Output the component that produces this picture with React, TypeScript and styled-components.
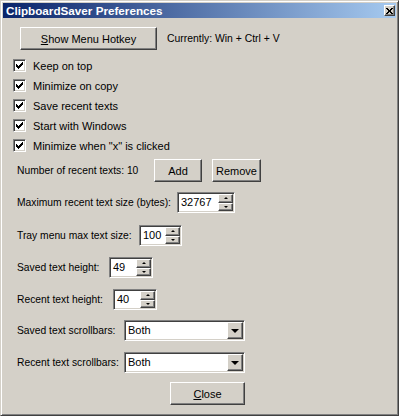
import React from 'react';
import styled, { createGlobalStyle } from 'styled-components';

const GlobalStyle = createGlobalStyle`
    html, body {
        margin: 0;
        padding: 0;
        background: #d4d0c8;
    }
    body {
        font-family: "Liberation Sans", Arial, sans-serif;
        font-size: 11px;
        color: #000;
    }
`;

// classic 7x7 check bitmap
const CHECK = [
    '......#',
    '.....##',
    '#...###',
    '##.###.',
    '#####..',
    '.###...',
    '..#....',
];

const checkboxes = [
    'Keep on top',
    'Minimize on copy',
    'Save recent texts',
    'Start with Windows',
    'Minimize when "x" is clicked',
];

const CheckMark = () => (
    <svg width="7" height="7" viewBox="0 0 7 7" shapeRendering="crispEdges">
        {CHECK.map((row, y) =>
            row.split('').map((c, x) =>
                c === '#' ? <rect key={`${x}-${y}`} x={x} y={y} width="1" height="1" fill="#000" /> : null
            )
        )}
    </svg>
);

const CloseGlyph = () => (
    <svg width="7" height="6" viewBox="0 0 7 6" shapeRendering="crispEdges">
        <path d="M0 0h2v1H0zM5 0h2v1H5zM1 1h2v1H1zM4 1h2v1H4zM2 2h3v2H2zM1 4h2v1H1zM4 4h2v1H4zM0 5h2v1H0zM5 5h2v1H5z" fill="#000" />
    </svg>
);

const Spinner = ({ value, width }: { value: string; width: number }) => (
    <SpinBox $w={width}>
        <SpinValue>{value}</SpinValue>
        <SpinButtons>
            <SpinButton><Arrow $up /></SpinButton>
            <SpinButton><Arrow /></SpinButton>
        </SpinButtons>
    </SpinBox>
);

const Combo = ({ value }: { value: string }) => (
    <ComboBox>
        <ComboValue>{value}</ComboValue>
        <DropButton><DropArrow /></DropButton>
    </ComboBox>
);

const App = () => {
    return (
        <>
            <GlobalStyle />
            <Window>
                <TitleBar>
                    <Title>ClipboardSaver Preferences</Title>
                    <CaptionButton><CloseGlyph /></CaptionButton>
                </TitleBar>
                <Body>
                    <Row $mt={9} $ml={17}>
                        <Button $w={137}><u>S</u>how Menu Hotkey</Button>
                        <Text $ml={10}>Currently: Win + Ctrl + V</Text>
                    </Row>
                    <CheckList>
                        {checkboxes.map((label) => (
                            <CheckRow key={label}>
                                <CheckBox><CheckMark /></CheckBox>
                                <span>{label}</span>
                            </CheckRow>
                        ))}
                    </CheckList>
                    <Row $mt={7} $ml={14}>
                        <Label $w={137}>Number of recent texts: 10</Label>
                        <Button $w={48}>Add</Button>
                        <Button $w={49} $ml={10}>Remove</Button>
                    </Row>
                    <Row $mt={10} $ml={14}>
                        <Label $w={160}>Maximum recent text size (bytes):</Label>
                        <Spinner value="32767" width={58} />
                    </Row>
                    <Row $mt={12} $ml={14}>
                        <Label $w={122}>Tray menu max text size:</Label>
                        <Spinner value="100" width={43} />
                    </Row>
                    <Row $mt={11} $ml={14}>
                        <Label $w={92}>Saved text height:</Label>
                        <Spinner value="49" width={44} />
                    </Row>
                    <Row $mt={11} $ml={14}>
                        <Label $w={96}>Recent text height:</Label>
                        <Spinner value="40" width={44} />
                    </Row>
                    <Row $mt={10} $ml={14}>
                        <Label $w={107}>Saved text scrollbars:</Label>
                        <Combo value="Both" />
                    </Row>
                    <Row $mt={11} $ml={14}>
                        <Label $w={107}>Recent text scrollbars:</Label>
                        <Combo value="Both" />
                    </Row>
                    <Row $mt={9} $ml={167}>
                        <Button $w={75}><u>C</u>lose</Button>
                    </Row>
                </Body>
            </Window>
        </>
    );
}

const raised = `
    border-style: solid;
    border-width: 1px;
    border-color: #fff #404040 #404040 #fff;
    box-shadow: inset -1px -1px 0 #808080, inset 1px 1px 0 #d4d0c8;
`;

const sunken = `
    border-style: solid;
    border-width: 1px;
    border-color: #808080 #fff #fff #808080;
    box-shadow: inset 1px 1px 0 #404040, inset -1px -1px 0 #d4d0c8;
`;

const Window = styled.div`
    box-sizing: border-box;
    width: 399px;
    height: 416px;
    background: #d4d0c8;
    border-style: solid;
    border-width: 1px;
    border-color: #d4d0c8 #404040 #404040 #d4d0c8;
    box-shadow: inset 1px 1px 0 #fff, inset -1px -1px 0 #808080;
    padding: 2px;
    display: flex;
    flex-direction: column;
`;

const TitleBar = styled.div`
    height: 15px;
    flex-shrink: 0;
    display: flex;
    align-items: center;
    justify-content: space-between;
    padding: 0 1px 0 3px;
    background: linear-gradient(to right, #0a246a, #a6caf0);
`;

const Title = styled.span`
    color: #fff;
    font-weight: bold;
    font-size: 11.7px;
    line-height: 15px;
    white-space: nowrap;
`;

const CaptionButton = styled.div`
    box-sizing: border-box;
    width: 11px;
    height: 11px;
    background: #d4d0c8;
    ${raised}
    display: flex;
    align-items: center;
    justify-content: center;
`;

const Body = styled.div`
    display: flex;
    flex-direction: column;
`;

const Row = styled.div<{ $mt: number; $ml: number }>`
    display: flex;
    align-items: center;
    margin-top: ${(p) => p.$mt}px;
    margin-left: ${(p) => p.$ml}px;
`;

const Text = styled.span<{ $ml?: number }>`
    margin-left: ${(p) => p.$ml || 0}px;
    font-size: 10.4px;
    white-space: nowrap;
`;

const Label = styled.span<{ $w: number }>`
    width: ${(p) => p.$w}px;
    flex-shrink: 0;
    font-size: 10.3px;
    white-space: nowrap;
`;

const Button = styled.div<{ $w: number; $ml?: number }>`
    box-sizing: border-box;
    width: ${(p) => p.$w}px;
    height: 23px;
    margin-left: ${(p) => p.$ml || 0}px;
    ${raised}
    background: #d4d0c8;
    display: flex;
    align-items: center;
    justify-content: center;
    white-space: nowrap;
`;

const CheckList = styled.div`
    display: flex;
    flex-direction: column;
    gap: 7px;
    margin-top: 9px;
    margin-left: 10px;
`;

const CheckRow = styled.div`
    display: flex;
    align-items: center;
    height: 13px;
    gap: 7px;
    white-space: nowrap;
`;

const CheckBox = styled.div`
    box-sizing: border-box;
    width: 13px;
    height: 13px;
    background: #fff;
    ${sunken}
    display: flex;
    align-items: center;
    justify-content: center;
`;

const SpinBox = styled.div<{ $w: number }>`
    box-sizing: border-box;
    width: ${(p) => p.$w}px;
    height: 21px;
    background: #fff;
    ${sunken}
    padding: 1px;
    display: flex;
`;

const SpinValue = styled.span`
    flex: 1;
    padding-left: 2px;
    line-height: 17px;
    font-size: 11px;
`;

const SpinButtons = styled.div`
    width: 15px;
    display: flex;
    flex-direction: column;
`;

const SpinButton = styled.div`
    box-sizing: border-box;
    flex: 1;
    background: #d4d0c8;
    ${raised}
    display: flex;
    align-items: center;
    justify-content: center;
`;

const Arrow = styled.div<{ $up?: boolean }>`
    width: 0;
    height: 0;
    border-left: 2px solid transparent;
    border-right: 2px solid transparent;
    ${(p) => (p.$up ? 'border-bottom: 2px solid #000;' : 'border-top: 2px solid #000;')}
`;

const ComboBox = styled.div`
    box-sizing: border-box;
    width: 121px;
    height: 21px;
    background: #fff;
    ${sunken}
    padding: 1px;
    display: flex;
`;

const ComboValue = styled.span`
    flex: 1;
    padding-left: 2px;
    line-height: 17px;
`;

const DropButton = styled.div`
    box-sizing: border-box;
    width: 16px;
    background: #d4d0c8;
    ${raised}
    display: flex;
    align-items: center;
    justify-content: center;
`;

const DropArrow = styled.div`
    width: 0;
    height: 0;
    border-left: 4px solid transparent;
    border-right: 4px solid transparent;
    border-top: 4px solid #000;
`;

export default App;
